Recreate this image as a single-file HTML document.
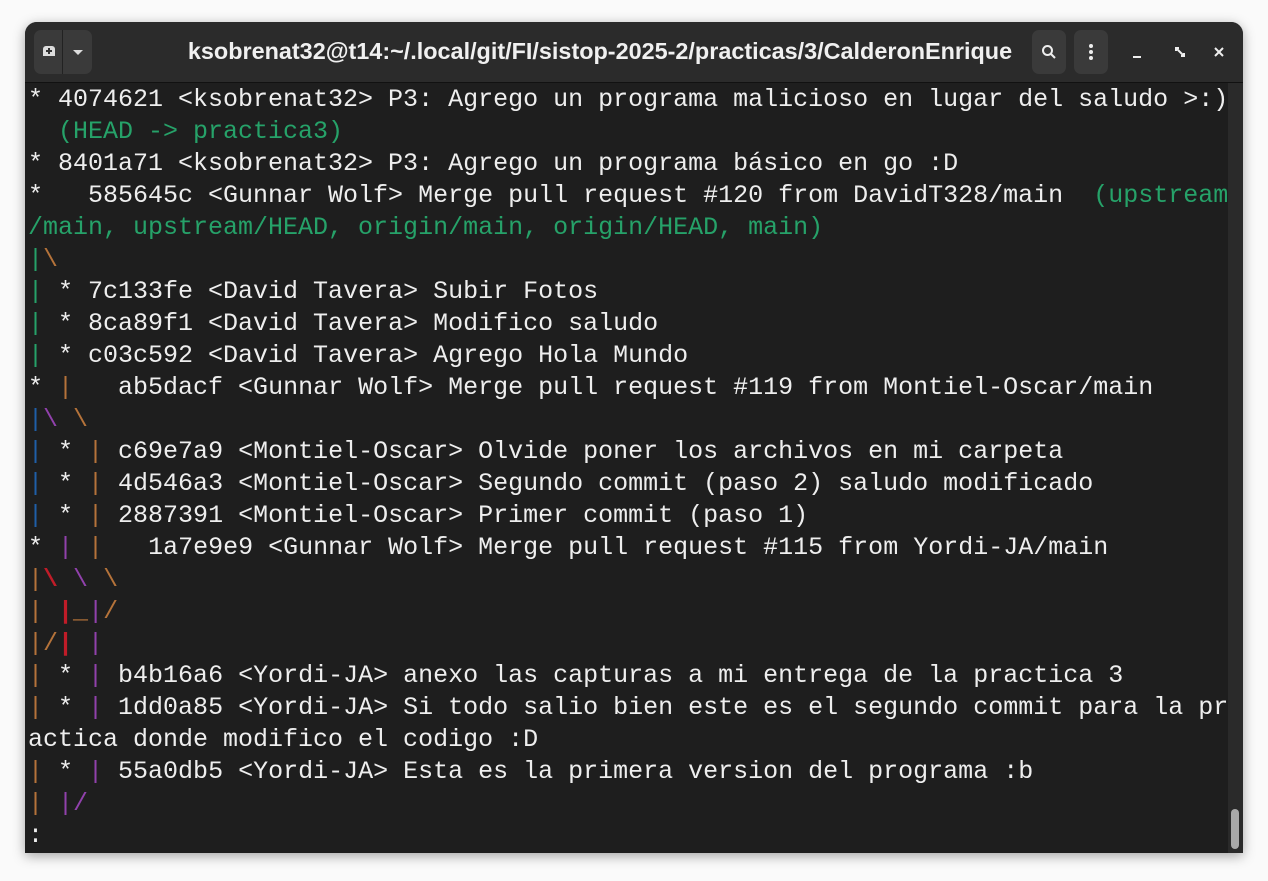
<!DOCTYPE html>
<html><head><meta charset="utf-8"><style>
html,body{margin:0;padding:0;width:1268px;height:881px;background:#fafafa;overflow:hidden}
.win{position:absolute;left:25px;top:22px;width:1218px;height:831px;background:#1e1e1e;border-radius:12px 12px 0 0;overflow:hidden;box-shadow:0 3px 12px rgba(0,0,0,.35)}
.tb{position:absolute;left:0;top:0;width:100%;height:60px;background:#2b2b2b;border-bottom:1px solid #111}
.title{position:absolute;left:0;width:1150px;top:16px;text-align:center;font:bold 23.4px "Liberation Sans",sans-serif;color:#f0f0f0}
.btn{position:absolute;top:8px;height:44px;background:#3a3a3a;border-radius:7px}
.term{position:absolute;left:3px;top:62px;font:25px/32px "Liberation Mono",monospace;color:#eee;white-space:pre}
.g{color:#26a269}.br{color:#b5733a}.bl{color:#1f5fa8}.pu{color:#9141ac}.rd{color:#c01c28;font-weight:bold}
.sb{position:absolute;left:1203px;top:61px;width:15px;height:770px;background:#2a2a2a}
.th{position:absolute;left:3px;top:726px;width:8px;height:40px;border-radius:4px;background:#a8a8a8}
</style></head><body>
<div class="win">
<div class="tb">
<div class="btn" style="left:9px;width:58px"></div>
<div style="position:absolute;left:37px;top:8px;width:1px;height:44px;background:#222"></div>
<div style="position:absolute;left:18px;top:24px;width:12px;height:10px;background:#ddd;border-radius:3px 3px 0 0"></div>
<div style="position:absolute;left:21px;top:28px;width:6px;height:2px;background:#333"></div>
<div style="position:absolute;left:23px;top:26px;width:2px;height:6px;background:#333"></div>
<div style="position:absolute;left:48px;top:28px;border-left:5px solid transparent;border-right:5px solid transparent;border-top:5px solid #ddd"></div>
<div class="title">ksobrenat32@t14:~/.local/git/FI/sistop-2025-2/practicas/3/CalderonEnrique</div>
<div class="btn" style="left:1007px;width:34px"></div>
<svg style="position:absolute;left:1016px;top:22px" width="16" height="16"><circle cx="6.5" cy="6.5" r="4.5" stroke="#eee" stroke-width="2" fill="none"/><line x1="10" y1="10" x2="14" y2="14" stroke="#eee" stroke-width="2"/></svg>
<div class="btn" style="left:1049px;width:34px"></div>
<div style="position:absolute;left:1064px;top:22px;width:4px;height:4px;border-radius:2px;background:#eee;box-shadow:0 6px #eee,0 12px #eee"></div>
<div style="position:absolute;left:1108px;top:34px;width:8px;height:2px;background:#eee"></div>
<svg style="position:absolute;left:1150px;top:25px" width="10" height="10"><path d="M1 4V1H4M9 6V9H6M2 2L8 8" stroke="#eee" stroke-width="2" fill="none"/></svg>
<svg style="position:absolute;left:1189px;top:25px" width="10" height="10"><path d="M1 1L9 9M9 1L1 9" stroke="#eee" stroke-width="2"/></svg>
</div>
<div class="term">* 4074621 &lt;ksobrenat32&gt; P3: Agrego un programa malicioso en lugar del saludo &gt;:)
<span class="g">  (HEAD -&gt; practica3)</span>
* 8401a71 &lt;ksobrenat32&gt; P3: Agrego un programa básico en go :D
*   585645c &lt;Gunnar Wolf&gt; Merge pull request #120 from DavidT328/main  <span class="g">(upstream</span>
<span class="g">/main, upstream/HEAD, origin/main, origin/HEAD, main)</span>
<span class="g">|</span><span class="br">\</span>
<span class="g">|</span> * 7c133fe &lt;David Tavera&gt; Subir Fotos
<span class="g">|</span> * 8ca89f1 &lt;David Tavera&gt; Modifico saludo
<span class="g">|</span> * c03c592 &lt;David Tavera&gt; Agrego Hola Mundo
* <span class="br">|</span>   ab5dacf &lt;Gunnar Wolf&gt; Merge pull request #119 from Montiel-Oscar/main
<span class="bl">|</span><span class="pu">\</span> <span class="br">\</span>
<span class="bl">|</span> * <span class="br">|</span> c69e7a9 &lt;Montiel-Oscar&gt; Olvide poner los archivos en mi carpeta
<span class="bl">|</span> * <span class="br">|</span> 4d546a3 &lt;Montiel-Oscar&gt; Segundo commit (paso 2) saludo modificado
<span class="bl">|</span> * <span class="br">|</span> 2887391 &lt;Montiel-Oscar&gt; Primer commit (paso 1)
* <span class="pu">|</span> <span class="br">|</span>   1a7e9e9 &lt;Gunnar Wolf&gt; Merge pull request #115 from Yordi-JA/main
<span class="br">|</span><span class="rd">\</span> <span class="pu">\</span> <span class="br">\</span>
<span class="br">|</span> <span class="rd">|</span><span class="br">_</span><span class="pu">|</span><span class="br">/</span>
<span class="br">|/</span><span class="rd">|</span> <span class="pu">|</span>
<span class="br">|</span> * <span class="pu">|</span> b4b16a6 &lt;Yordi-JA&gt; anexo las capturas a mi entrega de la practica 3
<span class="br">|</span> * <span class="pu">|</span> 1dd0a85 &lt;Yordi-JA&gt; Si todo salio bien este es el segundo commit para la pr
actica donde modifico el codigo :D
<span class="br">|</span> * <span class="pu">|</span> 55a0db5 &lt;Yordi-JA&gt; Esta es la primera version del programa :b
<span class="br">|</span> <span class="pu">|/</span>
:</div>
<div class="sb"><div class="th"></div></div>
</div>
</body></html>
